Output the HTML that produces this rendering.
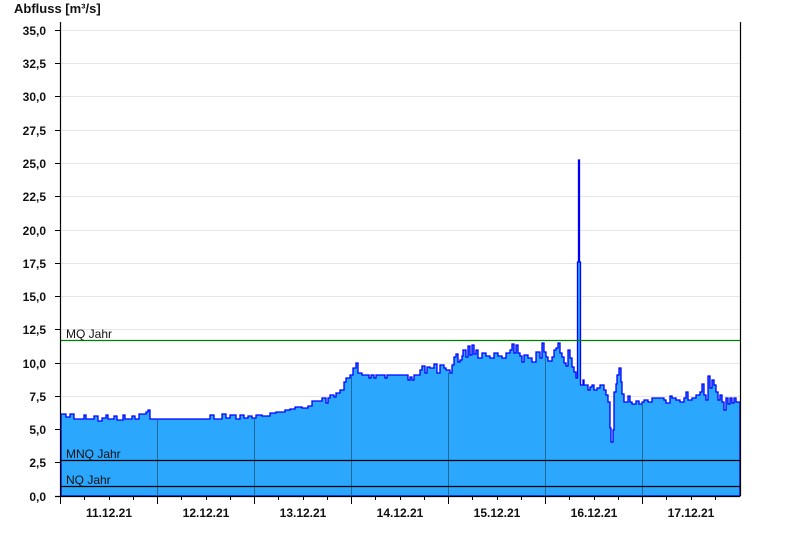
<!DOCTYPE html>
<html><head><meta charset="utf-8"><style>
body{margin:0;background:#fff;width:800px;height:550px;overflow:hidden}
svg text{font-family:"Liberation Sans",Arial,sans-serif}
</style></head><body>
<svg width="800" height="550" viewBox="0 0 800 550" xmlns="http://www.w3.org/2000/svg">
<text x="14" y="13" font-size="13" font-weight="bold" fill="#111">Abfluss [m³/s]</text>
<g stroke="#e6e6e6" stroke-width="1">
<line x1="61" y1="30.5" x2="740" y2="30.5"/><line x1="61" y1="63.5" x2="740" y2="63.5"/><line x1="61" y1="96.5" x2="740" y2="96.5"/><line x1="61" y1="130.5" x2="740" y2="130.5"/><line x1="61" y1="163.5" x2="740" y2="163.5"/><line x1="61" y1="196.5" x2="740" y2="196.5"/><line x1="61" y1="230.5" x2="740" y2="230.5"/><line x1="61" y1="263.5" x2="740" y2="263.5"/><line x1="61" y1="296.5" x2="740" y2="296.5"/><line x1="61" y1="329.5" x2="740" y2="329.5"/><line x1="61" y1="363.5" x2="740" y2="363.5"/><line x1="61" y1="396.5" x2="740" y2="396.5"/><line x1="61" y1="429.5" x2="740" y2="429.5"/><line x1="61" y1="462.5" x2="740" y2="462.5"/>
</g>
<path fill="#2ba7fe" stroke="#0000ff" stroke-width="1.3" d="M61,496 L61,414 H66 V417 H70 V414 H74 V419 H84 V415 H86 V419 H94 V416 H98 V421 H102 V418 H106 V415 H108 V419 H114 V416 H117 V420 H123 V415 H125 V419 H132 V416 H135 V419 H139 V414 H146 V412 H148 V410 H150 V419 H210 V415 H214 V419 H222 V414 H226 V418 H230 V415 H236 V419 H240 V415 H244 V418 H248 V416 H252 V418 H256 V415 H262 V416 H270 V413 H276 V412 H285 V410 H290 V409 H295 V407 H302 V408 H308 V406 H312 V401 H322 V398 H326 V403 H328 V398 H330 V395 H334 V397 H336 V393 H340 V390 H344 V382 H346 V378 H350 V375 H353 V368 H356 V363 H358 V373 H362 V375 H369 V378 H371 V375 H374 V378 H376 V375 H385 V378 H387 V375 H408 V380 H410 V377 H412 V380 H414 V375 H420 V370 H422 V366 H425 V373 H427 V367 H430 V368 H434 V364 H437 V373 H440 V365 H444 V368 H446 V370 H450 V373 H452 V365 H454 V357 H456 V354 H458 V362 H460 V360 H462 V356 H463 V350 H466 V357 H468 V346 H470 V355 H472 V345 H474 V354 H476 V350 H478 V358 H482 V353 H486 V356 H490 V358 H494 V353 H498 V356 H502 V358 H506 V353 H510 V350 H512 V344 H514 V353 H516 V345 H518 V353 H520 V356 H522 V362 H524 V355 H528 V358 H532 V362 H536 V352 H540 V358 H542 V343 H544 V352 H546 V357 H548 V361 H552 V357 H554 V350 H556 V348 H558 V343 H560 V353 H562 V357 H564 V363 H566 V366 H568 V350 H570 V358 H572 V367 H574 V372 H576 V378 H577.5 V262 H578.5 V160 H579.5 V262 H580.5 V385 H583 V380 H584 V385 H588 V390 H590 V387 H592 V385 H594 V390 H597 V388 H600 V385 H604 V390 H606 V395 H608 V402 H610 V428 H611 V442 H613 V430 H614 V392 H616 V384 H617 V375 H619 V368 H621 V382 H622 V394 H624 V402 H628 V396 H630 V402 H632 V404 H636 V401 H639 V404 H642 V402 H644 V400 H648 V402 H652 V398 H664 V400 H666 V403 H670 V396 H672 V398 H676 V400 H680 V402 H684 V398 H686 V392 H688 V400 H692 V398 H696 V395 H700 V392 H702 V384 H704 V395 H706 V400 H708 V376 H710 V388 H712 V380 H714 V385 H716 V392 H718 V400 H720 V395 H722 V402 H724 V410 H726 V398 H728 V404 H730 V398 H732 V403 H734 V398 H736 V402 H740 V496 Z"/>
<g stroke="#1f6a99" stroke-width="1"><line x1="157.5" y1="420" x2="157.5" y2="496"/><line x1="254.5" y1="419" x2="254.5" y2="496"/><line x1="351.5" y1="376" x2="351.5" y2="496"/><line x1="448.5" y1="373" x2="448.5" y2="496"/><line x1="545.5" y1="358" x2="545.5" y2="496"/><line x1="642.5" y1="403" x2="642.5" y2="496"/></g>
<line x1="61" y1="340.5" x2="740" y2="340.5" stroke="#008000" stroke-width="1.3"/>
<line x1="61" y1="460.5" x2="740" y2="460.5" stroke="#000" stroke-width="1.3"/>
<line x1="61" y1="486.5" x2="740" y2="486.5" stroke="#000" stroke-width="1.3"/>
<g font-size="12" fill="#111"><text x="66" y="338">MQ Jahr</text><text x="66" y="458">MNQ Jahr</text><text x="66" y="484">NQ Jahr</text></g>
<line x1="60.5" y1="22" x2="60.5" y2="496" stroke="#000" stroke-width="1.2"/>
<line x1="740.5" y1="22" x2="740.5" y2="496" stroke="#000" stroke-width="1.2"/>
<line x1="55" y1="496.5" x2="740" y2="496.5" stroke="#000" stroke-width="1.2"/>
<g stroke="#000" stroke-width="1">
<line x1="55" y1="30.5" x2="60" y2="30.5"/><line x1="55" y1="63.5" x2="60" y2="63.5"/><line x1="55" y1="96.5" x2="60" y2="96.5"/><line x1="55" y1="130.5" x2="60" y2="130.5"/><line x1="55" y1="163.5" x2="60" y2="163.5"/><line x1="55" y1="196.5" x2="60" y2="196.5"/><line x1="55" y1="230.5" x2="60" y2="230.5"/><line x1="55" y1="263.5" x2="60" y2="263.5"/><line x1="55" y1="296.5" x2="60" y2="296.5"/><line x1="55" y1="329.5" x2="60" y2="329.5"/><line x1="55" y1="363.5" x2="60" y2="363.5"/><line x1="55" y1="396.5" x2="60" y2="396.5"/><line x1="55" y1="429.5" x2="60" y2="429.5"/><line x1="55" y1="462.5" x2="60" y2="462.5"/>
<line x1="60.5" y1="496" x2="60.5" y2="504"/><line x1="157.5" y1="496" x2="157.5" y2="504"/><line x1="254.5" y1="496" x2="254.5" y2="504"/><line x1="351.5" y1="496" x2="351.5" y2="504"/><line x1="448.5" y1="496" x2="448.5" y2="504"/><line x1="545.5" y1="496" x2="545.5" y2="504"/><line x1="642.5" y1="496" x2="642.5" y2="504"/>
<line x1="84.5" y1="496" x2="84.5" y2="500"/><line x1="109.5" y1="496" x2="109.5" y2="500"/><line x1="133.5" y1="496" x2="133.5" y2="500"/><line x1="181.5" y1="496" x2="181.5" y2="500"/><line x1="206.5" y1="496" x2="206.5" y2="500"/><line x1="230.5" y1="496" x2="230.5" y2="500"/><line x1="278.5" y1="496" x2="278.5" y2="500"/><line x1="303.5" y1="496" x2="303.5" y2="500"/><line x1="327.5" y1="496" x2="327.5" y2="500"/><line x1="375.5" y1="496" x2="375.5" y2="500"/><line x1="400.5" y1="496" x2="400.5" y2="500"/><line x1="424.5" y1="496" x2="424.5" y2="500"/><line x1="472.5" y1="496" x2="472.5" y2="500"/><line x1="497.5" y1="496" x2="497.5" y2="500"/><line x1="521.5" y1="496" x2="521.5" y2="500"/><line x1="569.5" y1="496" x2="569.5" y2="500"/><line x1="594.5" y1="496" x2="594.5" y2="500"/><line x1="618.5" y1="496" x2="618.5" y2="500"/><line x1="666.5" y1="496" x2="666.5" y2="500"/><line x1="691.5" y1="496" x2="691.5" y2="500"/><line x1="715.5" y1="496" x2="715.5" y2="500"/>
</g>
<g font-size="12" font-weight="bold" fill="#111" text-anchor="end">
<text x="46" y="35">35,0</text><text x="46" y="68">32,5</text><text x="46" y="101">30,0</text><text x="46" y="135">27,5</text><text x="46" y="168">25,0</text><text x="46" y="201">22,5</text><text x="46" y="235">20,0</text><text x="46" y="268">17,5</text><text x="46" y="301">15,0</text><text x="46" y="334">12,5</text><text x="46" y="368">10,0</text><text x="46" y="401">7,5</text><text x="46" y="434">5,0</text><text x="46" y="467">2,5</text><text x="46" y="501">0,0</text>
</g>
<g font-size="12" font-weight="bold" fill="#111" text-anchor="middle">
<text x="109" y="517">11.12.21</text><text x="206" y="517">12.12.21</text><text x="303" y="517">13.12.21</text><text x="400" y="517">14.12.21</text><text x="497" y="517">15.12.21</text><text x="594" y="517">16.12.21</text><text x="691" y="517">17.12.21</text>
</g>
</svg>
</body></html>
